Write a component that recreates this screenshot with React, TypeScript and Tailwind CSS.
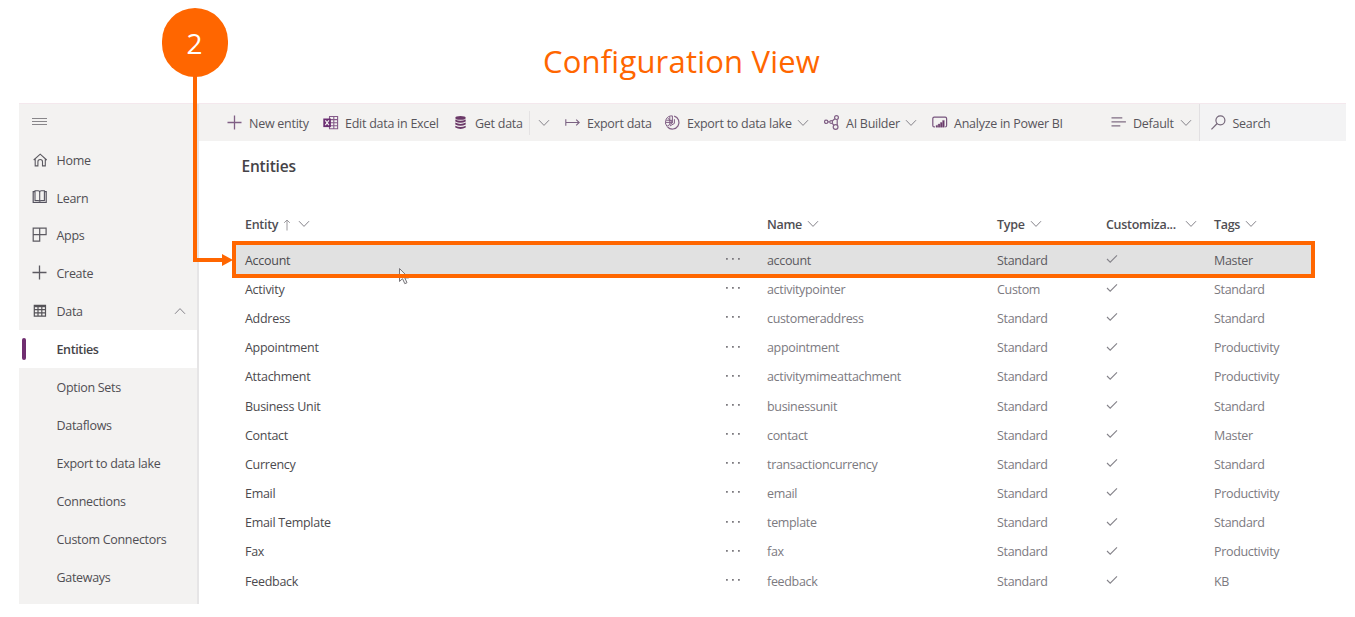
import type { ReactNode } from "react";

type IconProps = { className?: string };

const Chevron = ({ className = "" }: IconProps) => (
  <svg viewBox="0 0 12 8" className={`h-2 w-3 shrink-0 fill-none stroke-[#85838a] ${className}`}>
    <path d="M1 1.2 6 6.4 11 1.2" />
  </svg>
);

const Plus = ({ className = "" }: IconProps) => (
  <svg viewBox="0 0 16 16" className={`size-4 fill-none ${className}`}>
    <path d="M7.5.5v14M.5 7.5h14" strokeWidth="1.3" />
  </svg>
);

const Home = () => (
  <svg viewBox="0 0 16 16" className="size-4 fill-none stroke-[#5c5a61]">
    <path d="M1.7 8 8.2 2.2 14.7 8M3.2 7v6.9h2.7V9.8a2.3 2.3 0 0 1 4.6 0v4.1h2.8V7" strokeWidth="1.1" />
  </svg>
);

const Book = () => (
  <svg viewBox="0 0 16 16" className="size-4 fill-none stroke-[#55535f]">
    <path d="M3 1.8h3.2q1.5 0 1.5 1.6v9.4q0-1.2-1.5-1.2H3zM12.4 1.8H9.2q-1.5 0-1.5 1.6v9.4q0-1.2 1.5-1.2h3.2z" strokeWidth="1.1" />
    <path d="M3 2.6H1.2v10.9h13V2.6h-1.8" strokeWidth="1.2" />
  </svg>
);

const Apps = () => (
  <svg viewBox="0 0 16 16" className="size-4 fill-none stroke-[#5c5a61]">
    <path d="M1.2 1.2h12.9v6.5H1.2zM7.7 1.2v13H1.2v-13" strokeWidth="1.2" />
  </svg>
);

const Table = () => (
  <svg viewBox="0 0 16 16" className="size-4 fill-none stroke-[#555358]">
    <path d="M2.3 2.4h11.2v10.8H2.3zM2.3 6.7h11.2M2.3 9.8h11.2M6 3v10M9.8 3v10" strokeWidth="1.2" />
    <path d="M2.3 3.3h11.2" strokeWidth="1.8" />
  </svg>
);

const Excel = () => (
  <svg viewBox="0 0 16 16" className="size-4 fill-none stroke-[#855b8a]">
    <path d="M6 1.5h8.6v12.3H6M6 4.6h9M6 7.7h9M6 10.8h9M10.8 1.5v12.3M6.5 1.5v12.3" strokeWidth="1.1" />
    <path d="M.3 3.5h7.6v8.6H.3z" className="fill-[#6b2e72] stroke-none" />
    <path d="m2.3 5.3 3.6 4.9M5.9 5.3l-3.6 4.9" className="stroke-[#f3f2f1]" strokeWidth="1.2" />
  </svg>
);

const Database = () => (
  <svg viewBox="0 0 16 16" className="size-4 fill-[#6b3968]">
    <ellipse cx="7.5" cy="2.9" rx="5.2" ry="1.9" />
    <path d="M2.3 4.5q5.2 2.6 10.4 0v2q-5.2 2.4-10.4 0zM2.3 7.6q5.2 2.6 10.4 0v2q-5.2 2.4-10.4 0zM2.3 10.7q5.2 2.6 10.4 0v1.8q-5.2 2.8-10.4 0z" />
  </svg>
);

const ExportArrow = () => (
  <svg viewBox="0 0 16 16" className="size-4 fill-none stroke-[#7b6282]">
    <path d="M.8 4.2v6.6M.8 7.5h13.4M11.2 4.6l3 2.9-3 2.9" strokeWidth="1.1" />
  </svg>
);

const Lake = () => (
  <svg viewBox="0 0 16 16" className="size-4 fill-none stroke-[#805f85]">
    <path d="M9.2 1.1A6.6 6.6 0 1 1 2.6 12" strokeWidth="1.2" />
    <path d="M7.4.9v6.9L1.9 11.4A6.4 6.4 0 0 1 7.4.9zM.7 7.4h6.7M2.7 3l4.7 4.6M1.2 5.2l6.2.2M4.8 1.4v7.7" strokeWidth="1" />
    <path d="M9.4 4.2v4.2L4.9 11" strokeWidth="1" />
  </svg>
);

const AiBuilder = () => (
  <svg viewBox="0 0 16 16" className="size-4 fill-none stroke-[#805f85]">
    <circle cx="2.2" cy="6.8" r="1.7" strokeWidth="1.2" />
    <circle cx="12.5" cy="2.6" r="1.9" strokeWidth="1.2" />
    <circle cx="11.6" cy="12" r="2.4" strokeWidth="1.2" />
    <circle cx="7.2" cy="7" r="1.4" strokeWidth="1.1" />
    <path d="M3.9 6.9h1.9M8.2 6 10.9 3.8M8.1 8.1l1.8 2.2M13.2 4.5v5.6" strokeWidth="1.2" />
  </svg>
);

const PowerBi = () => (
  <svg viewBox="0 0 16 16" className="size-4 fill-none stroke-[#77547d]">
    <path d="M2.9 11.9h-.7A1.5 1.5 0 0 1 .8 10.4V3.5a1.5 1.5 0 0 1 1.4-1.4h11a1.5 1.5 0 0 1 1.4 1.4v6.9a1.5 1.5 0 0 1-1.4 1.5" strokeWidth="1.2" />
    <path d="M4 10.4h1.7v1.8H4zM6.2 9.1h1.7v3.1H6.2zM8.4 7.5h1.7v4.7H8.4zM10.6 5.4h1.7v6.8h-1.7z" className="fill-[#6b3968]" strokeWidth=".4" />
  </svg>
);

const Lines = () => (
  <svg viewBox="0 0 16 16" className="size-4 fill-none stroke-[#806d84]">
    <path d="M.5 2.9h10.8M.5 6.9h14.4M.5 10.9h8.8" strokeWidth="1.3" />
  </svg>
);

const Search = () => (
  <svg viewBox="0 0 16 16" className="size-4 fill-none stroke-[#75677a]">
    <circle cx="9.4" cy="5.3" r="4.5" strokeWidth="1.2" />
    <path d="M6.2 8.5.4 14.4" strokeWidth="1.3" />
  </svg>
);

const Check = () => (
  <svg viewBox="0 0 12 10" className="mb-1 h-2.5 w-3 fill-none stroke-[#85838a]">
    <path d="m1 5 3.2 3.2L11 1.4" strokeWidth="1.1" />
  </svg>
);

function Tool({ icon, label, className = "", chevron }: { icon: ReactNode; label: string; className?: string; chevron?: boolean }) {
  return (
    <div className={`flex shrink-0 items-center whitespace-nowrap ${className}`}>
      <span className="w-[22px] shrink-0">{icon}</span>
      <span className="pt-[3px]">{label}</span>
      {chevron && <Chevron className="mr-[15px] ml-auto" />}
    </div>
  );
}

const navMain = [
  { label: "Home", icon: <Home /> },
  { label: "Learn", icon: <Book /> },
  { label: "Apps", icon: <Apps /> },
  { label: "Create", icon: <Plus className="stroke-[#5c5a61]" /> },
  { label: "Data", icon: <Table /> },
];

const navData = ["Entities", "Option Sets", "Dataflows", "Export to data lake", "Connections", "Custom Connectors", "Gateways"];

const rows = [
  ["Account", "account", "Standard", "Master"],
  ["Activity", "activitypointer", "Custom", "Standard"],
  ["Address", "customeraddress", "Standard", "Standard"],
  ["Appointment", "appointment", "Standard", "Productivity"],
  ["Attachment", "activitymimeattachment", "Standard", "Productivity"],
  ["Business Unit", "businessunit", "Standard", "Standard"],
  ["Contact", "contact", "Standard", "Master"],
  ["Currency", "transactioncurrency", "Standard", "Standard"],
  ["Email", "email", "Standard", "Productivity"],
  ["Email Template", "template", "Standard", "Standard"],
  ["Fax", "fax", "Standard", "Productivity"],
  ["Feedback", "feedback", "Standard", "KB"],
];

const columns = "grid grid-cols-[480px_42px_230px_109px_108px_1fr] items-center pl-[9px]";

function Sidebar() {
  return (
    <nav className="flex w-[180px] shrink-0 flex-col border-r-2 border-[#e6e5e6] bg-[#f3f2f1] tracking-[-0.3px] text-[#504e53]">
      <div className="flex h-[36.6px] items-center pb-px pl-[13px]">
        <svg viewBox="0 0 15 9" className="h-[9px] w-[15px] fill-none stroke-[#88868a]">
          <path d="M0 1.5h15M0 4.5h15M0 7.5h15" />
        </svg>
      </div>
      {navMain.map(({ label, icon }) => (
        <div key={label} className="flex h-[37.9px] items-center pl-[13px]">
          <span className="w-[24.5px]">{icon}</span>
          <span className="pt-[3px]">{label}</span>
          {label === "Data" && <Chevron className="mr-[11px] ml-auto rotate-180" />}
        </div>
      ))}
      {navData.map((label) =>
        label === "Entities" ? (
          <div key={label} className="flex h-[37.9px] items-center bg-white pl-[3px] font-semibold tracking-[-0.38px] text-[#454347]">
            <span className="mr-[30.5px] h-[22px] w-1 rounded-sm bg-[#702e70]" />
            <span className="pt-[3px]">{label}</span>
          </div>
        ) : (
          <div key={label} className="flex h-[37.9px] items-center pt-[3.4px] pl-[37.5px]">
            {label}
          </div>
        ),
      )}
    </nav>
  );
}

function Toolbar() {
  return (
    <div className="flex h-[37px] items-center bg-[#f3f2f1] pl-7 tracking-[-0.26px] text-[#58555b]">
      <Tool className="w-24" icon={<Plus className="stroke-[#805f85]" />} label="New entity" />
      <Tool className="w-[130px]" icon={<Excel />} label="Edit data in Excel" />
      <Tool className="w-[76px]" icon={<Database />} label="Get data" />
      <div className="flex h-6 w-9 items-center border-l border-[#e4e2e3] pl-2">
        <Chevron />
      </div>
      <Tool className="w-[100px]" icon={<ExportArrow />} label="Export data" />
      <Tool className="w-[159px]" icon={<Lake />} label="Export to data lake" chevron />
      <Tool className="w-[108px]" icon={<AiBuilder />} label="AI Builder" chevron />
      <Tool className="w-[179px]" icon={<PowerBi />} label="Analyze in Power BI" />
      <Tool className="w-[96px]" icon={<Lines />} label="Default" chevron />
      <div className="-ml-2 flex h-full flex-1 items-center border-l border-[#e2e0e2] bg-[#f3f3f4] pl-[10.5px]">
        <Tool icon={<Search />} label="Search" />
      </div>
    </div>
  );
}

function EntityTable() {
  return (
    <div className="pl-[37px]">
      <div className={`${columns} h-[38px] font-semibold tracking-[-0.3px] text-[#504e53]`}>
        <span className="flex items-center">
          Entity
          <svg viewBox="0 0 8 12" className="ml-[5px] h-3 w-2 fill-none stroke-[#9a989c]">
            <path d="M4 11.5V1M1.2 3.8 4 1l2.8 2.8" />
          </svg>
          <Chevron className="mb-0.5 ml-[7px]" />
        </span>
        <span />
        <span className="flex items-center gap-[5px]">Name <Chevron className="mb-0.5" /></span>
        <span className="flex items-center gap-[5px]">Type <Chevron className="mb-0.5" /></span>
        <span className="flex items-center gap-[9px]">Customiza... <Chevron className="mb-0.5" /></span>
        <span className="flex items-center gap-[5px]">Tags <Chevron className="mb-0.5" /></span>
      </div>
      {rows.map(([entity, name, type, tag], i) => (
        <div key={entity} className={`mr-[35px] tracking-[-0.33px] ${i === 0 ? "-mt-0.5 bg-[#e1e1e1] pt-[4.5px] text-[#5c5a5f]" : "text-[#7c7a7f]"}`}>
          <div className={`${columns} h-[29.18px]`}>
            <span className="tracking-[-0.28px] text-[#4c4a4e]">{entity}</span>
            <svg viewBox="0 0 14 2" className="mb-1 ml-px h-0.5 w-3.5 fill-[#7c7a7f]">
              <path d="M0 0h1.8v1.8H0zM6 0h1.8v1.8H6zM12 0h1.8v1.8H12z" />
            </svg>
            <span>{name}</span>
            <span>{type}</span>
            <Check />
            <span>{tag}</span>
          </div>
        </div>
      ))}
    </div>
  );
}

export default function App() {
  return (
    <div className="relative h-[617px] w-[1355px] overflow-hidden bg-white font-['Open_Sans',sans-serif] text-[12.5px]">
      <header className="flex h-[103px] items-center justify-center pt-5 pl-[8px]">
        <h1 className="text-[31px] tracking-[0.2px] text-[#ff6600]">Configuration View</h1>
      </header>

      <div className="ml-[19px] flex h-[501px] w-[1327px] overflow-hidden border-t border-[#f4e8ed]">
        <Sidebar />
        <main className="min-w-0 flex-1">
          <Toolbar />
          <h2 className="mt-3 h-[53px] pl-[42.5px] text-[15.5px] leading-[26px] font-semibold tracking-[-0.2px] text-[#454347]">Entities</h2>
          <EntityTable />
        </main>
      </div>

      <svg viewBox="0 0 14 18" className="absolute top-[267px] left-[398px] h-[18px] w-3.5 fill-[#f4f4f4] stroke-[#77757a]">
        <path d="M1.5 1.5v13l3-2.8 2.3 5 2.2-1-2.2-4.8h4z" />
      </svg>
      <div className="absolute top-[241px] left-[232px] h-[37px] w-[1083px] border-4 border-[#ff6600]" />
      <div className="absolute top-[70px] left-[193px] h-48 w-[31px] border-b-4 border-l-4 border-[#ff6600]" />
      <svg viewBox="0 0 12 14" className="absolute top-[253px] left-[222px] h-3.5 w-3 fill-[#ff6600]">
        <path d="M0 1v12l11-6z" />
      </svg>
      <div className="absolute top-2 left-[162px] flex h-[69px] w-[66px] items-center justify-center rounded-full bg-[#ff6600] pr-px text-[28px] font-medium text-white">2</div>
    </div>
  );
}
